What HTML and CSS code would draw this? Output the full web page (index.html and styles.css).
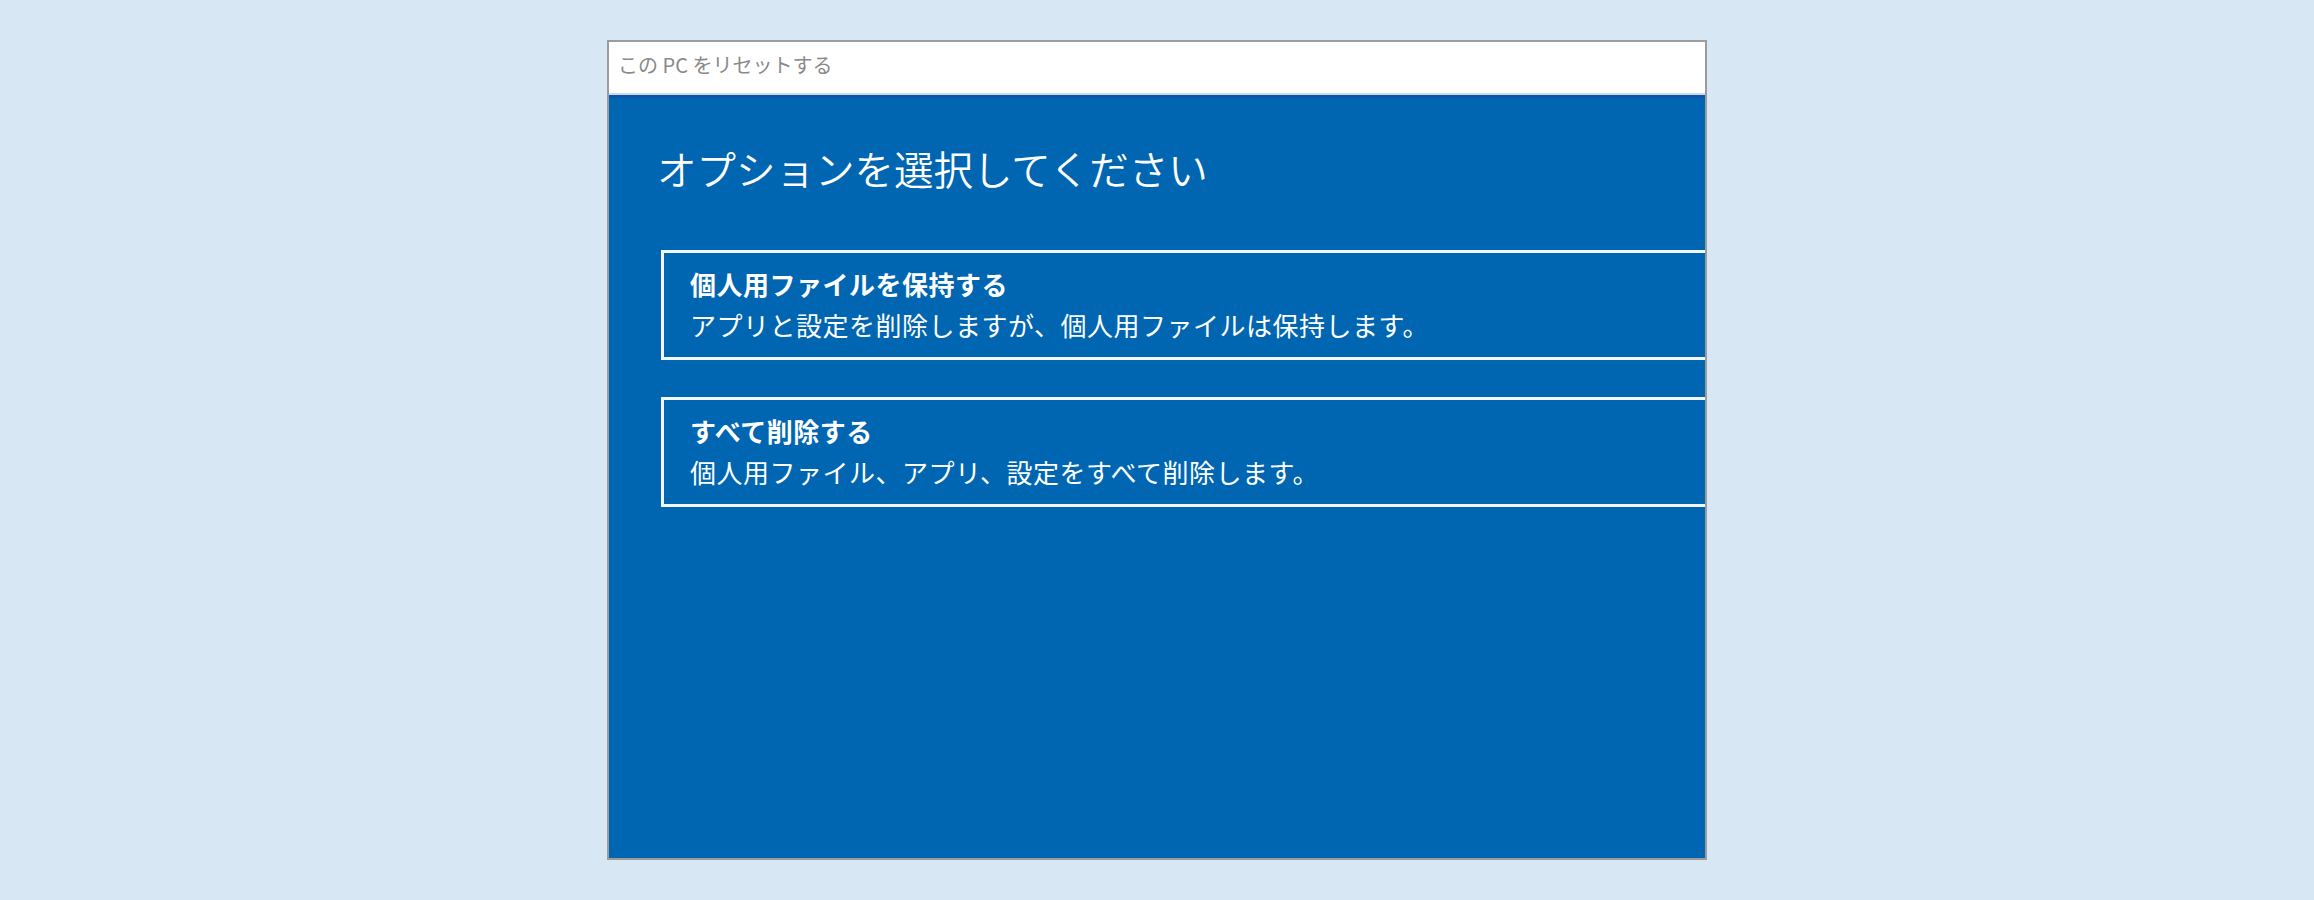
FILE: index.html
```html
<!DOCTYPE html>
<html lang="ja">
<head>
<meta charset="utf-8">
<title>この PC をリセットする</title>
<link rel="stylesheet" href="styles.css">
</head>
<body>
<div class="window">
  <div class="titlebar">この PC をリセットする</div>
  <div class="content">
    <h1 class="heading">オプションを選択してください</h1>
    <div class="option">
      <div class="opt-title">個人用ファイルを保持する</div>
      <div class="opt-desc">アプリと設定を削除しますが、個人用ファイルは保持します。</div>
    </div>
    <div class="option">
      <div class="opt-title">すべて削除する</div>
      <div class="opt-desc">個人用ファイル、アプリ、設定をすべて削除します。</div>
    </div>
  </div>
</div>
</body>
</html>
```
FILE: styles.css
```css
html, body {
  margin: 0;
  padding: 0;
  background: #d7e8f4;
  height: 100%;
}
body {
  font-family: "Noto Sans CJK JP", "Noto Sans", sans-serif;
}
.window {
  box-sizing: border-box;
  width: 1100px;
  height: 820px;
  margin: 40px auto 0;
  border: 2px solid #9c9c9c;
  background: #0066b2;
  display: flex;
  flex-direction: column;
  overflow: hidden;
}
.titlebar {
  height: 51px;
  background: #ffffff;
  color: #8a8a8a;
  font-size: 20px;
  line-height: 46px;
  padding-left: 9px;
  letter-spacing: 0;
  border-bottom: 2px solid #c9dcec;
  flex: none;
}
.content {
  flex: 1;
  border-top: 3px solid #0a55a6;
  padding: 45px 0 0 48px;
  display: flex;
  flex-direction: column;
}
.heading {
  margin: 0 0 57px 0;
  font-size: 39.5px;
  font-weight: 350;
  line-height: 50px;
  color: #ffffff;
  letter-spacing: 0;
}
.option {
  box-sizing: border-box;
  height: 110px;
  margin: 0 -40px 37px 4px;
  border: 3px solid #f2f7fc;
  padding: 11px 0 0 26px;
  color: #ffffff;
}
.opt-title {
  font-size: 26px;
  font-weight: 700;
  line-height: 40px;
  letter-spacing: 0.5px;
}
.opt-desc {
  font-size: 26px;
  font-weight: 400;
  line-height: 42px;
  letter-spacing: 0.5px;
}
```
